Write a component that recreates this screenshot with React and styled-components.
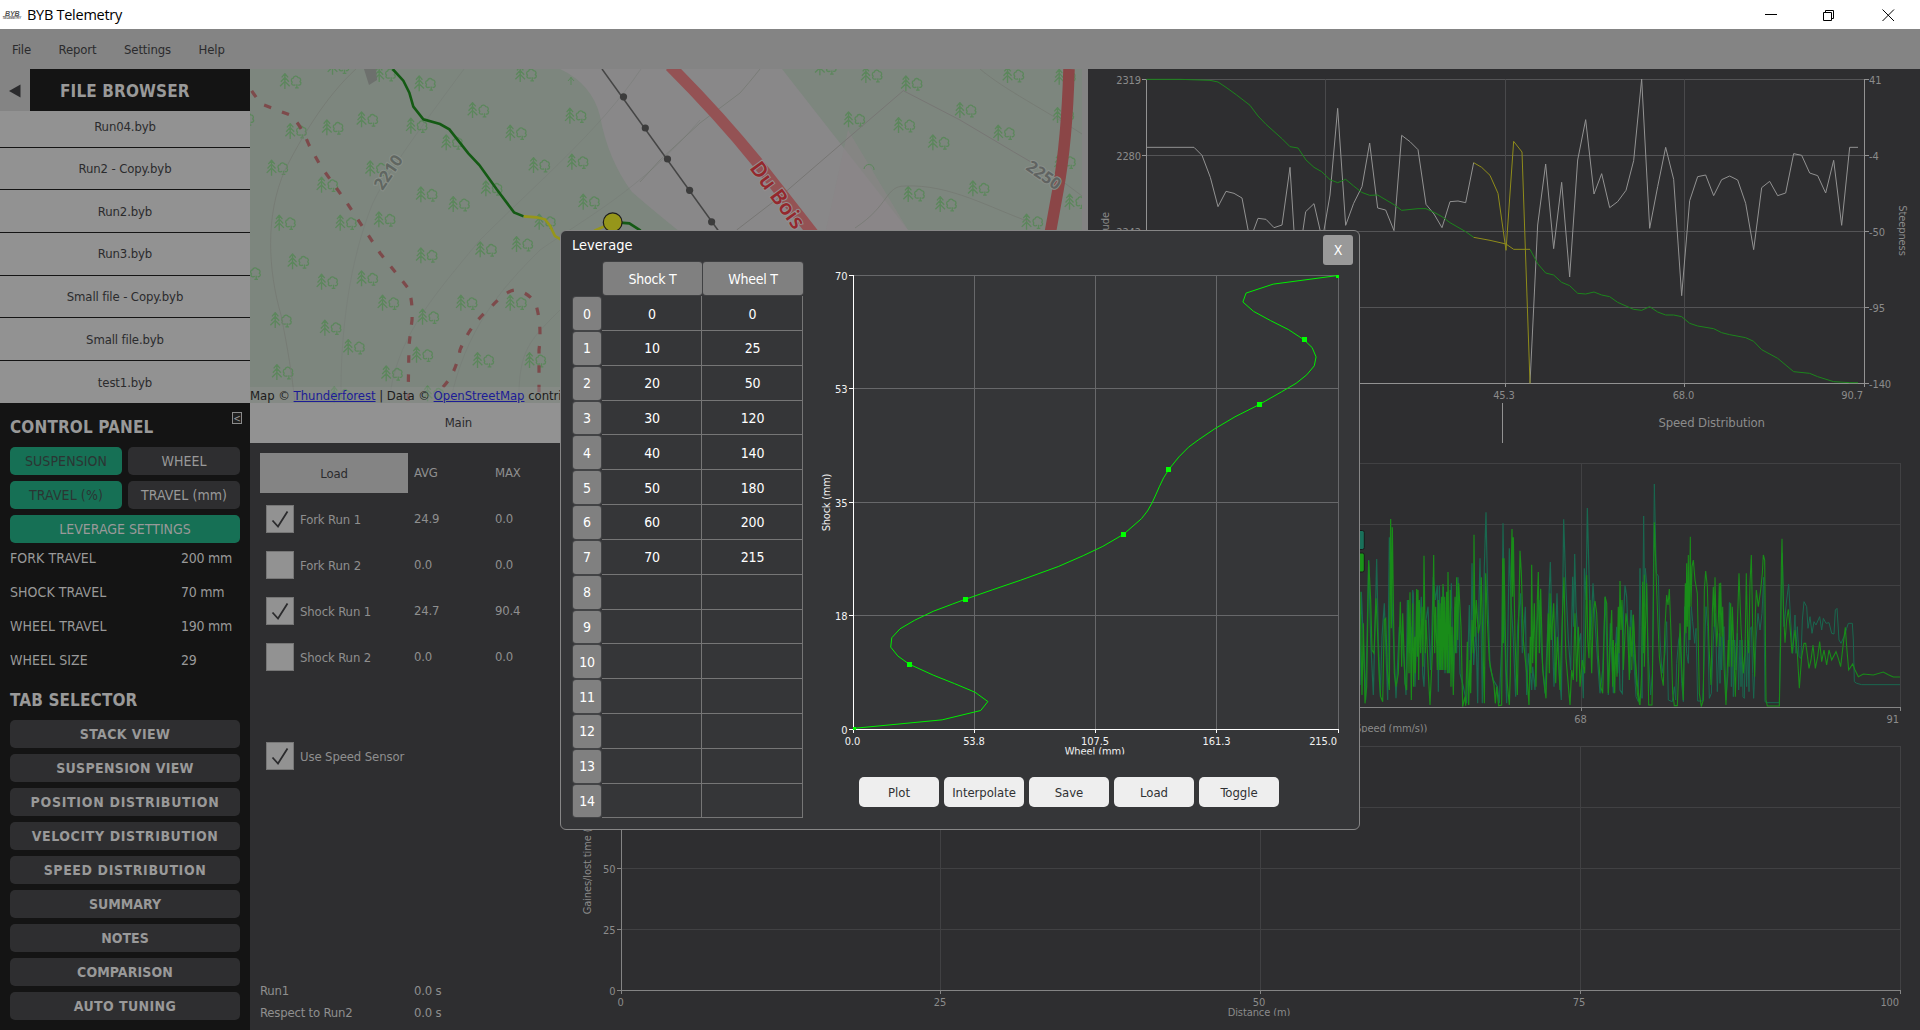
import React from "react";
import styled, { createGlobalStyle, css } from "styled-components";

const Global = createGlobalStyle`
  *, *::before, *::after { box-sizing: border-box; }
  html, body { margin: 0; padding: 0; background: #2e2e30; overflow: hidden; }
  body, button {
    font-family: "DejaVu Sans Condensed", "DejaVu Sans", sans-serif;
    font-stretch: condensed;
    font-size: 13px;
    letter-spacing: -0.12px;
  }
  button { border: 0; padding: 0; margin: 0; }
`;

const Window = styled.div`
  position: relative;
  width: 1920px;
  height: 1030px;
  display: flex;
  flex-direction: column;
  background: #2e2e30;
  overflow: hidden;
`;

/* ---------- title bar and menu ---------- */

const TitleBar = styled.header`
  flex: 0 0 29px;
  display: flex;
  align-items: center;
  background: #ffffff;
  color: #000;
`;

const TitleText = styled.span`
  flex: 1;
  margin-left: 4px;
  font-family: "Open Sans", "Noto Sans", sans-serif;
  font-stretch: normal;
  font-size: 14.5px;
  letter-spacing: -0.27px;
`;

const Controls = styled.div`
  display: flex;
  svg { display: block; width: 58.5px; height: 28px; }
`;

const MenuBar = styled.nav`
  flex: 0 0 40px;
  display: flex;
  align-items: center;
  gap: 27.5px;
  padding-left: 12px;
  background: #848484;
  color: #2b2b2d;
  letter-spacing: -0.12px;
`;

const Body = styled.div`
  flex: 1;
  display: flex;
  min-height: 0;
`;

/* ---------- sidebar ---------- */

const Sidebar = styled.aside`
  flex: 0 0 250px;
  display: flex;
  flex-direction: column;
  background: #141414;
`;

const BrowserHead = styled.div`
  flex: 0 0 42px;
  display: flex;
`;

const Collapse = styled.button`
  width: 30px;
  background: #848484;
  svg { display: block; margin: 1px 0 0 8px; }
`;

const Heading = styled.h2`
  margin: 0;
  font-size: 17px;
  font-weight: 700;
  letter-spacing: 0.12px;
  color: #999;
`;

const BrowserTitle = styled(Heading)`
  flex: 1;
  display: flex;
  align-items: center;
  padding: 1px 0 0 30px;
`;

const FileList = styled.div`
  flex: 0 0 292px;
  overflow: hidden;
  background: #929292;
`;

const FileRow = styled.div`
  height: 42.7px;
  display: flex;
  align-items: center;
  justify-content: center;
  border-bottom: 1px solid #141414;
  color: #2b2b2d;
  &:first-child { margin-top: -6px; padding-top: 1px; }
  &:last-child { border-bottom: 0; }
`;

const Panel = styled.div`
  flex: 1;
  display: flex;
  flex-direction: column;
  padding: 9px 10px 0;
`;

const PanelHead = styled.div`
  flex: 0 0 35px;
  display: flex;
  justify-content: space-between;
  ${Heading} { line-height: 31px; }
`;

const MiniButton = styled.button`
  width: 10px;
  height: 12px;
  margin-right: -2px;
  border: 1px solid #8b8b8b;
  background: #202020;
  color: #999;
  font-size: 10px;
  line-height: 9px;
  letter-spacing: 0;
`;

const ButtonGrid = styled.div`
  display: grid;
  grid-template-columns: 112px 112px;
  gap: 6px;
`;

const PanelButton = styled.button`
  height: 28px;
  border-radius: 5px;
  font-size: 14px;
  background: ${(p) => (p.$on ? "#167055" : "#2e2e30")};
  color: ${(p) => (p.$on && !p.$light ? "#2b3533" : "#999")};
  grid-column: ${(p) => (p.$wide ? "1 / -1" : "auto")};
  font-weight: ${(p) => (p.$bold ? 700 : 400)};
  letter-spacing: ${(p) => p.$track || 0}px;
`;

const Setting = styled.div`
  height: 34px;
  display: flex;
  align-items: center;
  font-size: 14px;
  letter-spacing: -0.25px;
  color: #999;
  span:first-child { width: 171px; letter-spacing: 0.05px; }
`;

const Settings = styled.div`
  margin-top: -2px;
  margin-bottom: 6px;
`;

const TabHeading = styled(Heading)`
  flex: 0 0 37px;
  line-height: 35px;
`;

/* ---------- right area ---------- */

const Main = styled.main`
  flex: 1;
  min-width: 0;
  display: flex;
  flex-direction: column;
`;

const TopRow = styled.div`
  flex: 0 0 334px;
  display: flex;
  background: #838383;
  gap: 6px;
`;

const MapBox = styled.div`
  position: relative;
  width: 832px;
  height: 334px;
  overflow: hidden;
  svg { display: block; }
`;

const Attribution = styled.div`
  position: absolute;
  left: 0;
  right: 0;
  bottom: 0;
  height: 16px;
  line-height: 17px;
  white-space: nowrap;
  background: rgba(145, 145, 145, 0.4);
  color: #1c1c1c;
  letter-spacing: -0.04px;
  a { color: #1c1c96; text-decoration: underline; }
`;

const PlotBox = styled.div`
  flex: 1;
  background: #2e2e30;
  svg { display: block; }
`;

const Tabs = styled.div`
  flex: 0 0 40px;
  display: flex;
`;

const Tab = styled.div`
  flex: 1;
  display: flex;
  align-items: center;
  justify-content: center;
  background: ${(p) => (p.$active ? "#929292" : "#2e2e30")};
  color: ${(p) => (p.$active ? "#2b2b2d" : "#8c8c8c")};
  padding-bottom: 1px;
  ${(p) => !p.$active && css`border-left: 1px solid #929292;`}
`;

const Content = styled.div`
  flex: 1;
  display: flex;
  min-height: 0;
`;

const RunPanel = styled.section`
  flex: 0 0 310px;
  display: flex;
  flex-direction: column;
  padding: 10px 0 0 10px;
  color: #8f8f8f;
`;

const RunRow = styled.div`
  display: grid;
  grid-template-columns: 154px 81px 1fr;
  align-items: center;
  height: ${(p) => p.$h || 46}px;
  margin-top: ${(p) => p.$top || 0}px;
  > span { padding-bottom: 1px; letter-spacing: -0.2px; white-space: nowrap; }
`;

const LoadButton = styled.button`
  width: 148px;
  height: 40px;
  background: #848484;
  color: #2b2b2d;
`;

const CheckLabel = styled.label`
  display: flex;
  align-items: center;
  gap: 6px;
  padding-left: 6px;
  white-space: nowrap;
`;

const Box = styled.span`
  width: 28px;
  height: 28px;
  border: 1px solid #767676;
  background: #929292;
  svg { display: block; }
`;

const Charts = styled.section`
  flex: 1;
  display: flex;
  flex-direction: column;
  svg { display: block; }
`;

/* ---------- dialog ---------- */

const Dialog = styled.div`
  position: absolute;
  left: 560px;
  top: 230px;
  width: 800px;
  height: 600px;
  display: flex;
  flex-direction: column;
  border: 1px solid #868686;
  border-radius: 6px;
  background: #353638;
  color: #fff;
`;

const DialogHead = styled.div`
  flex: 0 0 auto;
  height: 31px;
  display: flex;
  align-items: flex-start;
  justify-content: space-between;
  padding: 4px 6px 0 11px;
  font-size: 14.5px;
  line-height: 20px;
  letter-spacing: 0;
`;

const Close = styled.button`
  width: 30px;
  height: 30px;
  border-radius: 3px;
  background: #999;
  color: #fff;
  font-size: 14px;
`;

const DialogBody = styled.div`
  flex: 1;
  min-height: 0;
  display: flex;
  gap: 1px;
`;

const Table = styled.div`
  width: 231px;
  margin-left: 11px;
  display: grid;
  grid-template-columns: 30px 100px 101px;
  grid-template-rows: 34.2px repeat(15, 34.82px);
  align-content: start;
  font-size: 14px;
  letter-spacing: -0.2px;
`;

const ColumnHead = styled.div`
  margin-left: 1px;
  height: 33px;
  display: flex;
  align-items: center;
  justify-content: center;
  border-radius: 3px;
  background: #808080;
  box-shadow: 0 0 0 1px #404143;
`;

const RowHead = styled.div`
  margin: 1px 1px 1px 1px;
  display: flex;
  align-items: center;
  justify-content: center;
  border-radius: 3px;
  background: #808080;
  box-shadow: 0 0 0 1px #434446;
`;

const Cell = styled.div`
  display: flex;
  align-items: center;
  justify-content: center;
  padding: 1px 0 0 1px;
  border-right: 1px solid #767676;
  border-bottom: 1px solid #767676;
`;

const Side = styled.div`
  flex: 1;
  display: flex;
  flex-direction: column;
  svg { display: block; }
`;

const Actions = styled.div`
  display: flex;
  gap: 5px;
  padding: 15px 0 0 55px;
`;

const Action = styled.button`
  width: 80px;
  height: 30px;
  border-radius: 5px;
  background: #eeeeee;
  color: #303133;
  letter-spacing: -0.05px;
`;

/* ---------- chart pieces ---------- */

const Label = styled.text`
  font-family: "DejaVu Sans Condensed", "DejaVu Sans", sans-serif;
  font-stretch: condensed;
  font-size: 11px;
  letter-spacing: ${(p) => p.$ls || "-0.1px"};
  fill: ${(p) => p.$fill || "#8b8b8b"};
  text-anchor: ${(p) => p.$anchor || "middle"};
`;

const Line = styled.polyline`
  fill: none;
  stroke: ${(p) => p.$color};
  stroke-width: ${(p) => p.$w || 1};
`;

/* Turns a flat "x,y x,y" list into user units: origin + value / scale. */
const trace = (text, ox, oy, sx = 3, sy = 3) =>
  text
    .trim()
    .split(/\s+/)
    .map((pair) => {
      const [x, y] = pair.split(",").map(Number);
      return `${(ox + x / sx).toFixed(2)},${(oy + y / sy).toFixed(2)}`;
    })
    .join(" ");

function Axes({ xs, ys, grid, axis, right, vgrid }) {
  const x0 = xs[0];
  const x1 = xs[xs.length - 1];
  const y0 = ys[0];
  const y1 = ys[ys.length - 1];
  return (
    <g shapeRendering="crispEdges" strokeWidth="1">
      {ys.slice(0, -1).map((y) => (
        <path key={`h${y}`} d={`M${x0} ${y + 0.5}H${x1 + 1}`} stroke={grid} />
      ))}
      {xs.slice(1).map((x) => (
        <path key={`v${x}`} d={`M${x + 0.5} ${y0}V${y1}`} stroke={vgrid || grid} />
      ))}
      {ys.map((y) => (
        <path key={`t${y}`} d={`M${x0 - 4} ${y + 0.5}H${x0}`} stroke={axis} />
      ))}
      {xs.map((x) => (
        <path key={`b${x}`} d={`M${x + 0.5} ${y1}V${y1 + 4}`} stroke={axis} />
      ))}
      <path d={`M${x0 + 0.5} ${y0}V${y1 + 1}M${x0} ${y1 + 0.5}H${x1 + 1}`} stroke={axis} fill="none" />
      {right && <path d={`M${x1 + 0.5} ${y0}V${y1 + 1}`} stroke={axis} />}
      {right && ys.map((y) => <path key={`r${y}`} d={`M${x1} ${y + 0.5}H${x1 + 5}`} stroke={axis} />)}
    </g>
  );
}

/* ---------- map ---------- */

const treesLeft = "152,63 295,20 555,70 435,42 858,42 715,150 382,178 278,202 168,213 530,197 1007,167 828,218 636,247 898,315 1013,305 112,323 408,325 262,374 755,385 560,403 657,432 1047,425 135,488 318,488 434,478 915,485 847,552 738,568 560,586 175,604 262,665 382,655 30,638 445,728 680,728 828,728 565,770 123,780 272,803 342,861 547,884 730,900 886,900 128,936 456,940 10,175 580,1000 300,1003";
const treesRight = "557,22 695,45 815,70 1120,45 643,178 977,150 793,195 1092,218 896,247 1016,385 822,402 918,432 1177,485 1275,50 1270,165 1306,425 1275,305";

function Tree({ x, y }) {
  return (
    <g transform={`translate(${x} ${y})`} fill="none" stroke="#5c875c" strokeWidth="1.3" strokeLinejoin="round">
      <path d="M-5.8 8V-7M-9 -3.6L-5.8 -7.4L-2.6 -3.6M-9.8 0.8L-5.8 -3.6L-1.8 0.8M-10.6 5.2L-5.8 0.4L-1 5.2" />
      <path d="M4.8 3.8C1.5 5 .2 3 1.5 1.2C0 -.4 .6 -2.8 2.6 -2.8C3 -5.2 6.4 -5.6 7.3 -3.4C9.8 -3.6 10.8 -.8 9.3 .6C11.4 2 9.6 4.8 7.6 3.8M6.2 6.8V3.2M4.4 6.8H8" />
    </g>
  );
}

const pts = (text, ox) => trace(text, ox, 60).split(" ").map((p) => p.split(",").map(Number));

function TrailMap() {
  const L = (s) => trace(s, 240, 60);
  const R = (s) => trace(s, 640, 60);
  const contour = { fill: "none", stroke: "#747872", strokeWidth: 1, opacity: 0.75 };
  const faint = { ...contour, opacity: 0.4 };
  return (
    <svg width="832" height="334" viewBox="250 69 832 334">
      <rect x="250" y="69" width="832" height="334" fill="#7d867e" />
      <path d="M560 69Q592 84 600 116Q608 160 632 192Q655 212 690 240V403H1000L908 230L782 69Z" fill="#898889" />
      <path d="M848 130L908 230H826Z" fill="#8a8587" opacity=".6" />
      {pts(treesLeft, 240).map(([x, y]) => <Tree key={`${x}-${y}`} x={x} y={y} />)}
      {pts(treesRight, 640).map(([x, y]) => <Tree key={`${x}-${y}`} x={x} y={y} />)}
      <path d="M571 85V77M568 81L571 77.5L574 81" stroke="#5c875c" fill="none" />
      <path d="M864 169A4 4 0 1 1 874 170" stroke="#5c875c" fill="none" />
      <path d="M356 69C325 97 300 140 285 170C265 215 268 270 281 315C288 350 292 375 295 403" {...contour} />
      <path d="M464 69C430 115 385 175 372 205C350 260 340 330 341 403" {...faint} />
      <path d="M641 69C600 130 540 180 480 240C430 300 395 340 389 403" {...faint} />
      <path d="M700 120C640 190 590 215 540 250C500 290 465 330 450 403" {...faint} />
      <path d="M560 310C530 340 518 350 519 403" {...faint} />
      <path d="M760 69Q748 84 740 93L700 123L660 160L640 182" {...contour} />
      <Line $color="#777674" points={R("290,510 420,410 600,255 790,92 960,180 1120,275 1180,310")} />
      <path d="M980 69C1005 90 1045 110 1082 134M855 228C890 205 885 186 905 186C950 184 990 208 1030 222M1058 178L1082 196" {...contour} />
      <path d="M364 69H376L377 80L369 85Z" fill="#6d706d" />
      <path
        d="M251 90C256 97 259 102 264 105L290 115Q300 123 309 145L320 165L347 203L380 253L408 288Q413 300 412 320L409 345L408 403"
        fill="none" stroke="#7d4a4b" strokeWidth="3.2" strokeDasharray="7.5 11.6" strokeDashoffset="-1"
      />
      <path
        d="M443 387Q456 373 460 350Q470 325 490 308Q508 289 516 290Q530 293 536 305Q542 325 539 350L539 403"
        fill="none" stroke="#7d4a4b" strokeWidth="3.2" strokeDasharray="7.5 11.8"
      />
      <Line $color="#454545" $w={1.5} points="602,69 720,233" />
      {[[623.5, 96.8], [645.3, 128], [667.5, 159], [689.6, 190.3], [711.6, 221.8]].map(([x, y]) => (
        <circle key={x} cx={x} cy={y} r="3.6" fill="#3c3c3c" />
      ))}
      <path d="M670 66Q718 114 757 162L815 236" fill="none" stroke="#945254" strokeWidth="11.5" />
      <path d="M1069 69Q1067 140 1058 190L1050 234" fill="none" stroke="#8b4647" strokeWidth="11.5" />
      <g fontFamily="Noto Sans, Open Sans, sans-serif" style={{ letterSpacing: 0 }}>
        <text transform="translate(382.5 191) rotate(-56)" fontSize="16.5" fontWeight="700" fill="#606661" stroke="#8a918a" strokeWidth="2" paintOrder="stroke">2210</text>
        <text transform="translate(1025 169) rotate(35)" fontSize="16.5" fontWeight="700" fill="#606361" stroke="#8a8f8a" strokeWidth="2" paintOrder="stroke">2250</text>
        <text transform="translate(749 168) rotate(54)" fontSize="21" fontWeight="600" fill="#94282d" stroke="#958f90" strokeWidth="2" paintOrder="stroke">Du Bois</text>
      </g>
      <Line $color="#145a14" $w={2.6} points={L("458,27 490,62 508,98 520,140 550,178 600,192 628,208 685,280 718,315 770,388 822,457 851,469")} />
      <Line $color="#96961a" $w={2.6} points={L("851,469 890,472 915,478 930,497 945,528 962,538")} />
      <Line $color="#96961a" $w={2.6} points={L("1063,512 1110,492")} />
      <Line $color="#145a14" $w={2.6} points={L("1140,488 1168,490 1202,512")} />
      <circle cx="612.7" cy="222.3" r="9.4" fill="#96961a" stroke="#1c1c1c" strokeWidth="1.2" />
    </svg>
  );
}

/* ---------- altitude / steepness ---------- */

const steepA = "199,262 342,262 366,286 391,352 414,440 438,394 462,400 486,414 510,540 534,475 558,478 582,503 606,495 630,322 650,640 677,455 702,431 727,540 750,405 773,145 797,496 821,430 846,380 869,249 893,444 917,450 942,512 965,226 990,245 1014,269 1038,433 1062,462 1086,503 1110,425 1134,423 1157,428 1181,308";
const steepY = "1181,308 1205,322 1230,346 1254,400 1278,571 1301,244 1326,276 1350,970";
const steepB = "150,970 173,495 197,312 221,566 245,367 269,651 293,300 317,179 342,402 365,341 389,443 413,425 438,391 461,302 485,57 509,505 533,380 557,262 581,358 605,707 629,422 653,350 677,345 701,407 725,359 749,348 773,360 797,430 821,569 845,383 869,364 893,407 917,399 941,281 965,286 989,339 1013,347 1037,399 1061,301 1085,496 1109,262 1134,262";
const altA = "199,58 300,58 390,61 414,66 438,82 470,105 510,136 534,168 558,193 606,236 630,260 654,264 678,300 702,322 725,335 750,359 773,368 797,358 821,378 845,397 869,406 893,405 942,434 965,451 1014,446 1038,446 1062,457 1086,470 1110,488 1157,515 1181,532";
const altY = "1181,532 1230,541 1278,552 1301,568 1350,568";
const altB = "150,568 173,611 197,639 221,645 245,667 269,677 293,700 317,702 342,696 365,705 389,710 413,727 438,738 461,748 485,751 509,740 533,756 557,765 581,765 605,770 629,790 653,798 701,806 725,818 749,824 797,833 821,844 845,869 893,895 941,935 989,940 1013,950 1061,965 1109,968 1134,968";

function AltitudePlot() {
  const ys = [79, 155, 231, 307, 383];
  return (
    <svg width="832" height="334" viewBox="1088 69 832 334">
      <Axes xs={[1146, 1325, 1505, 1684, 1864]} ys={ys} grid="#545456" vgrid="#49494b" axis="#929292" right />
      <Line $color="#929292" points={trace(steepA, 1080, 60)} />
      <Line $color="#929292" points={trace(steepB, 1480, 60)} />
      <Line $color="#8f8c1a" points={trace(steepY, 1080, 60)} />
      <Line $color="#1c851c" points={trace(altA, 1080, 60)} />
      <Line $color="#1c851c" points={trace(altB, 1480, 60)} />
      <Line $color="#8f8c1a" points={trace(altY, 1080, 60)} />
      {["2319", "2280", "2242", "2203", "2164"].map((t, i) => (
        <Label key={t} $anchor="end" x="1141" y={ys[i] + 5}>{t}</Label>
      ))}
      {["41", "-4", "-50", "-95", "-140"].map((t, i) => (
        <Label key={t} $anchor="start" x="1869" y={ys[i] + 5}>{t}</Label>
      ))}
      <Label x="1325" y="399">22.7</Label>
      <Label x="1504" y="399">45.3</Label>
      <Label x="1683.5" y="399">68.0</Label>
      <Label $anchor="end" x="1863" y="399">90.7</Label>
      <Label transform="translate(1109 231) rotate(-90)">Altitude</Label>
      <Label transform="translate(1899 230.5) rotate(90)">Steepness</Label>
    </svg>
  );
}

/* ---------- speed ---------- */

const greenA = "30,455 36,765 40,550 45,790 50,740 56,362 62,480 66,630 72,640 78,475 82,560 88,720 92,770 98,785 103,540 107,535 112,690 118,750 120,420 122,237 124,565 127,262 133,700 138,740 145,700 151,485 155,680 158,520 165,730 170,750 175,480 177,700 180,457 184,780 188,490 191,740 194,590 196,700 200,447 202,650 204,450 206,720 208,480 212,640 216,500 219,680 222,347 226,640 228,540 235,700 240,795 247,640 251,345 254,640 257,500 262,690 265,480 268,690 270,490 272,690 275,470 277,690 279,432 282,690 284,470 287,690 290,455 292,700 294,396 298,700 301,450 303,740 306,560 310,765 315,470 317,640 320,412 323,600 326,430 333,560 338,800 345,770 347,797 352,605 356,795 360,660 362,760 366,540 370,640 372,284 375,590 379,480 385,580 390,550 394,412 399,620 403,790 407,400 412,540 418,660 425,700 432,735 436,790 440,740 446,797 455,795 458,355 460,610 462,355 468,690 478,795 481,700 484,380 486,267 488,470 490,292 495,600 502,765 510,332 514,400 520,600 530,700 537,795 541,590 543,700 545,374 548,670 553,490 558,740 562,480 565,396 568,640 572,446 578,690 588,775 595,520 598,700 600,460 604,600 611,490 617,730 622,590 630,750 636,560 642,412 645,560 648,655 660,795 665,690 670,720 675,520 680,725 685,560 690,740 697,660 704,700 710,405 713,600 717,655 720,480 725,700 730,510 735,483 740,520 745,650 752,740 758,760 765,470 770,490 775,760 780,630 785,510 788,740 790,600 794,760 797,610 801,710 805,500 807,640 810,423 813,570 816,480 820,690 828,520 833,560 838,720 841,560 845,650 850,524 855,650 862,760 869,795";
const greenB = "5,690 10,524 15,640 22,730 30,795 35,700 38,425 41,640 43,404 43,680 50,430 56,795 66,795 69,600 73,247 80,450 88,650 95,710 100,737 105,560 110,465 114,495 118,447 123,580 128,760 133,797 142,797 146,700 150,550 155,680 160,780 166,430 168,580 170,370 172,560 175,345 177,600 181,290 183,500 186,380 190,360 195,420 202,460 208,760 214,800 220,780 223,450 227,393 232,440 237,620 243,735 247,520 250,440 253,560 255,412 260,620 265,540 268,430 270,620 272,428 276,590 278,500 282,680 288,795 295,600 297,680 299,540 302,490 305,680 307,500 310,580 316,770 322,560 327,400 333,560 340,700 345,640 349,400 353,600 356,640 360,430 364,345 368,560 374,710 376,520 379,450 385,500 392,450 397,400 400,345 404,360 408,780 412,798 448,798 452,600 454,380 456,296 460,500 465,608 470,540 475,508 480,560 486,640 495,570 502,640 508,745 515,650 522,610 527,610 530,630 537,685 543,660 549,615 556,685 563,650 569,605 575,665 582,630 590,675 597,630 605,660 618,635 625,655 632,680 640,610 646,562 650,620 656,690 668,672 675,690 685,710 700,702 730,705 760,696 775,704 790,711 810,711";
const tealA = "30,735 34,455 40,600 47,780 56,360 62,600 70,765 80,357 85,600 91,770 96,590 103,490 108,640 113,780 118,292 123,400 129,560 138,775 148,560 158,600 168,765 172,480 178,640 182,560 184,700 188,450 190,460 195,740 200,560 205,620 214,470 218,700 222,740 228,540 234,500 242,690 250,410 256,480 262,436 265,755 268,436 275,690 280,440 285,700 290,460 295,700 300,560 304,430 310,740 315,500 320,640 324,412 330,700 340,740 350,790 358,495 362,700 366,370 371,675 378,560 383,790 387,480 390,355 397,790 403,380 408,217 410,320 413,460 420,680 430,720 442,740 448,790 452,685 456,600 459,250 464,580 470,790 478,325 483,480 490,600 497,770 503,560 512,460 517,640 526,500 530,765 535,640 540,690 545,750 548,680 555,750 560,560 567,480 575,640 585,760 595,520 601,366 606,560 612,740 621,460 628,700 634,780 638,480 641,238 647,430 655,600 662,690 668,410 671,560 674,342 678,500 685,620 692,580 700,775 703,385 708,480 712,204 716,360 722,600 729,430 736,560 742,650 750,760 758,690 766,470 775,765 781,550 790,760 800,560 803,700 806,600 810,750 817,760 821,520 825,436 830,470 836,640 843,510 850,600 858,730 866,740";
const tealB = "0,700 4,510 10,640 18,770 25,785 30,385 33,560 36,775 41,228 44,500 46,385 50,430 55,650 62,765 67,700 73,132 79,400 85,408 90,600 96,700 105,640 110,545 115,780 127,785 133,740 137,780 140,670 146,600 150,580 155,730 160,785 164,500 170,640 175,670 178,540 180,600 184,500 188,545 194,610 198,565 203,783 218,783 224,620 228,500 233,560 238,775 244,760 250,600 256,520 262,755 268,580 270,730 273,590 275,690 278,580 282,560 288,780 294,700 298,488 300,488 304,740 307,600 310,770 314,600 318,690 322,580 326,750 330,600 333,740 336,600 339,770 343,775 346,600 350,740 353,600 357,755 360,570 364,560 368,700 371,775 378,600 384,520 390,570 396,520 401,412 405,785 410,788 448,788 453,480 457,340 462,560 470,480 476,433 482,540 488,640 495,525 498,640 502,560 507,650 513,655 517,540 522,485 530,500 534,565 540,530 546,580 552,545 558,555 569,530 575,570 580,535 588,550 597,548 605,580 612,582 616,510 621,505 627,600 633,610 642,590 650,565 655,550 667,550 670,600 673,725 680,730 695,734 810,734";

function SpeedPlot() {
  return (
    <svg width="1360" height="297" viewBox="560 443 1360 297">
      <Axes xs={[621, 941, 1261, 1581, 1900]} ys={[463, 524, 585, 646, 707]} grid="#414143" axis="#848484" />
      <Line $color="#19684f" $w={1.2} points={trace(tealA, 1350, 440)} />
      <Line $color="#19684f" points={trace(tealB, 1630, 440)} />
      <Line $color="#198c19" $w={1.2} points={trace(greenA, 1350, 440)} />
      <Line $color="#198c19" $w={1.1} points={trace(greenB, 1630, 440)} />
      <rect x="1340" y="530.5" width="24.3" height="19" rx="2" fill="#19705a" stroke="#1b1b1b" />
      <rect x="1340" y="553" width="24.3" height="19" rx="2" fill="#199419" stroke="#1b1b1b" />
      <Label x="1580.5" y="723">68</Label>
      <Label $anchor="end" x="1899" y="723">91</Label>
      <svg x="1300" y="720" width="200" height="12.5">
        <Label $anchor="end" x="127.3" y="12">Speed (mm/s))</Label>
      </svg>
    </svg>
  );
}

function TimePlot() {
  const ys = [746, 807, 868, 929, 990];
  return (
    <svg width="1360" height="290" viewBox="560 740 1360 290">
      <Axes xs={[621, 940, 1260, 1580, 1900]} ys={ys} grid="#414143" axis="#848484" />
      {["100", "75", "50", "25", "0"].map((t, i) => (
        <Label key={t} $anchor="end" x="615.5" y={ys[i] + 5}>{t}</Label>
      ))}
      <Label x="620.5" y="1006">0</Label>
      <Label x="940" y="1006">25</Label>
      <Label x="1259" y="1006">50</Label>
      <Label x="1579" y="1006">75</Label>
      <Label $anchor="end" x="1899" y="1006">100</Label>
      <svg x="1200" y="1000" width="200" height="16">
        <Label x="59" y="16">Distance (m)</Label>
      </svg>
      <Label transform="translate(591 867) rotate(-90)">Gaines/lost time (s)</Label>
    </svg>
  );
}

/* ---------- leverage curve ---------- */

const curve = "121,1294 370,1272 478,1248 498,1225 462,1201 405,1179 345,1157 278,1129 246,1108 226,1085 229,1061 252,1038 293,1016 345,993 400,974 435,962 510,938 590,913 695,878 765,850 820,826 878,795 928,755 945,735 958,714 968,694 978,673 990,650 1005,628 1033,596 1060,571 1088,552 1133,524 1190,493 1257,462 1320,429 1361,407 1391,385 1412,362 1417,339 1406,315 1383,295 1340,269 1290,246 1242,222 1212,198 1221,175 1297,152 1477,130";
const leverage = [[0, 0], [10, 25], [20, 50], [30, 120], [40, 140], [50, 180], [60, 200], [70, 215]];

function LeveragePlot() {
  const ys = [275, 388, 502, 615, 729];
  const white = "#f2f2f2";
  return (
    <svg width="555" height="500" viewBox="804 262 555 500">
      <Axes xs={[853, 974, 1095, 1216, 1338]} ys={ys} grid="#67686a" axis="#ffffff" />
      <Line $color="#00ee00" points={trace(curve, 810, 225, 2.8, 2.5705)} />
      <svg x="853" y="275" width="486" height="455">
        {leverage.map(([s, w]) => (
          <rect key={s} x={Math.floor((w / 215) * 485 - 2)} y={Math.floor(454 - (s / 70) * 454 - 2)} width="5" height="5" fill="#00ff00" />
        ))}
      </svg>
      {["70", "53", "35", "18", "0"].map((t, i) => (
        <Label key={t} $fill={white} $anchor="end" x="847.5" y={ys[i] + 5}>{t}</Label>
      ))}
      <Label $fill={white} x="852.5" y="745">0.0</Label>
      <Label $fill={white} x="974" y="745">53.8</Label>
      <Label $fill={white} x="1095" y="745">107.5</Label>
      <Label $fill={white} x="1216.5" y="745">161.3</Label>
      <Label $fill={white} $anchor="end" x="1337" y="745">215.0</Label>
      <svg x="1050" y="745" width="100" height="9.5">
        <Label $fill={white} x="44.7" y="10">Wheel (mm)</Label>
      </svg>
      <Label $fill={white} $ls="-0.25px" transform="translate(830 502.5) rotate(-90)">Shock (mm)</Label>
    </svg>
  );
}

/* ---------- page ---------- */

const files = ["Run04.byb", "Run2 - Copy.byb", "Run2.byb", "Run3.byb", "Small file - Copy.byb", "Small file.byb", "test1.byb"];
const settings = [["FORK TRAVEL", "200 mm"], ["SHOCK TRAVEL", "70 mm"], ["WHEEL TRAVEL", "190 mm"], ["WHEEL SIZE", "29"]];
const views = [
  ["STACK VIEW", 0.4],
  ["SUSPENSION VIEW", 0.3],
  ["POSITION DISTRIBUTION", 0.7],
  ["VELOCITY DISTRIBUTION", 0.6],
  ["SPEED DISTRIBUTION", 0.6],
  ["SUMMARY", 0],
  ["NOTES", 0],
  ["COMPARISON", 0.1],
  ["AUTO TUNING", 0.4],
];
const runs = [["Fork Run 1", true, "24.9", "0.0"], ["Fork Run 2", false, "0.0", "0.0"], ["Shock Run 1", true, "24.7", "90.4"], ["Shock Run 2", false, "0.0", "0.0"]];

const ViewList = styled.div`
  display: flex;
  flex-direction: column;
  gap: 6px;
`;

function Check({ on, children }) {
  return (
    <CheckLabel>
      <Box>
        {on && (
          <svg width="26" height="26" viewBox="0 0 26 26">
            <path d="M5.5 14.5L11 20.5L20.5 5.5" fill="none" stroke="#2b2b2d" strokeWidth="1.8" />
          </svg>
        )}
      </Box>
      {children}
    </CheckLabel>
  );
}

export default function App() {
  return (
    <Window>
      <Global />
      <TitleBar>
        <svg width="23" height="28" viewBox="0 0 23 28">
          <g fontFamily="Liberation Sans, sans-serif" fontWeight="700" fontStyle="italic" fill="#555">
            <text x="5" y="15.2" fontSize="7.5" textLength="14.5" lengthAdjust="spacingAndGlyphs">BYB</text>
            <text x="2.5" y="18.4" fontSize="3.2" textLength="18.5" lengthAdjust="spacingAndGlyphs">TELEMETRY</text>
          </g>
        </svg>
        <TitleText>BYB Telemetry</TitleText>
        <Controls>
          <svg viewBox="0 0 58.5 28"><path d="M20 13.5H32" stroke="#000" shapeRendering="crispEdges" /></svg>
          <svg viewBox="0 0 58.5 28">
            <path d="M20.5 11.5H28.5V19.5H20.5ZM22.5 11.5V9.5H30.5V17.5H28.5" fill="none" stroke="#000" />
          </svg>
          <svg viewBox="0 0 58.5 28"><path d="M20.5 8.5L32 20M32 8.5L20.5 20" stroke="#000" /></svg>
        </Controls>
      </TitleBar>
      <MenuBar>
        <span>File</span><span>Report</span><span>Settings</span><span>Help</span>
      </MenuBar>
      <Body>
        <Sidebar>
          <BrowserHead>
            <Collapse>
              <svg width="14" height="14" viewBox="0 0 14 14"><path d="M1 7L12.5 .5V13.5Z" fill="#2b2b2d" /></svg>
            </Collapse>
            <BrowserTitle>FILE BROWSER</BrowserTitle>
          </BrowserHead>
          <FileList>{files.map((f) => <FileRow key={f}>{f}</FileRow>)}</FileList>
          <Panel>
            <PanelHead>
              <Heading>CONTROL PANEL</Heading>
              <MiniButton>&lt;</MiniButton>
            </PanelHead>
            <ButtonGrid>
              <PanelButton $on $track={0.1}>SUSPENSION</PanelButton>
              <PanelButton $track={0.05}>WHEEL</PanelButton>
              <PanelButton $on $track={0.1}>TRAVEL (%)</PanelButton>
              <PanelButton $track={0.05}>TRAVEL (mm)</PanelButton>
              <PanelButton $on $light $wide $track={-0.02}>LEVERAGE SETTINGS</PanelButton>
            </ButtonGrid>
            <Settings>
              {settings.map(([k, v]) => <Setting key={k}><span>{k}</span><span>{v}</span></Setting>)}
            </Settings>
            <TabHeading>TAB SELECTOR</TabHeading>
            <ViewList>
              {views.map(([name, track]) => <PanelButton key={name} $bold $track={track}>{name}</PanelButton>)}
            </ViewList>
          </Panel>
        </Sidebar>
        <Main>
          <TopRow>
            <MapBox>
              <TrailMap />
              <Attribution>
                Map © <a>Thunderforest</a> | Data © <a>OpenStreetMap</a> contributors
              </Attribution>
            </MapBox>
            <PlotBox><AltitudePlot /></PlotBox>
          </TopRow>
          <Tabs>
            <Tab $active>Main</Tab>
            <Tab />
            <Tab />
            <Tab>Speed Distribution</Tab>
          </Tabs>
          <Content>
            <RunPanel>
              <RunRow $h={40}><LoadButton>Load</LoadButton><span>AVG</span><span>MAX</span></RunRow>
              <RunRow $top={3}><Check on>{runs[0][0]}</Check><span>{runs[0][2]}</span><span>{runs[0][3]}</span></RunRow>
              {runs.slice(1).map(([name, on, avg, max]) => (
                <RunRow key={name}><Check on={on}>{name}</Check><span>{avg}</span><span>{max}</span></RunRow>
              ))}
              <RunRow $top={53}><Check on>Use Speed Sensor</Check></RunRow>
              <RunRow $h={22} $top={201}><span>Run1</span><span>0.0 s</span></RunRow>
              <RunRow $h={22}><span>Respect to Run2</span><span>0.0 s</span></RunRow>
            </RunPanel>
            <Charts>
              <SpeedPlot />
              <TimePlot />
            </Charts>
          </Content>
        </Main>
      </Body>
      <Dialog>
        <DialogHead><span>Leverage</span><Close>X</Close></DialogHead>
        <DialogBody>
          <Table>
            <span />
            <ColumnHead>Shock T</ColumnHead>
            <ColumnHead>Wheel T</ColumnHead>
            {Array.from({ length: 15 }, (_, i) => (
              <React.Fragment key={i}>
                <RowHead>{i}</RowHead>
                <Cell>{leverage[i] && leverage[i][0]}</Cell>
                <Cell>{leverage[i] && leverage[i][1]}</Cell>
              </React.Fragment>
            ))}
          </Table>
          <Side>
            <LeveragePlot />
            <Actions>
              {["Plot", "Interpolate", "Save", "Load", "Toggle"].map((t) => <Action key={t}>{t}</Action>)}
            </Actions>
          </Side>
        </DialogBody>
      </Dialog>
    </Window>
  );
}
